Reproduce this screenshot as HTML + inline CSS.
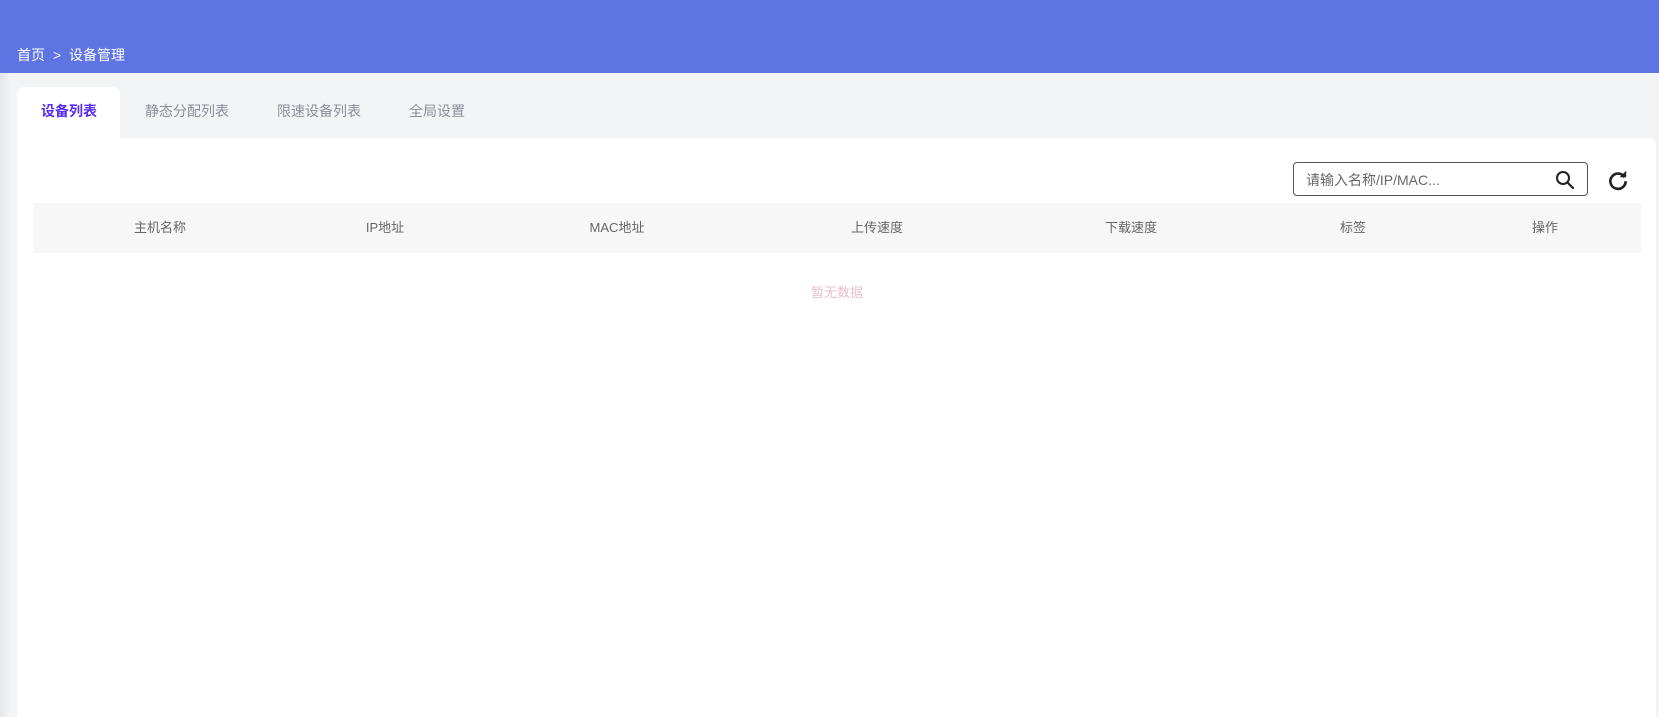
<!DOCTYPE html>
<html><head><meta charset="utf-8"><style>
*{margin:0;padding:0;box-sizing:border-box}
html,body{width:1659px;height:717px;overflow:hidden}
body{background:#f3f4f6;font-family:"Liberation Sans","Noto Sans CJK SC",sans-serif;position:relative}
.hdr{position:absolute;left:0;top:0;width:1659px;height:73px;background:#5e74e2}
.bc{position:absolute;left:17px;top:46px;color:#fff;font-size:14px;line-height:18px}
.shadow{position:absolute;left:0;top:73px;width:10px;height:644px;background:linear-gradient(to right,#e5e6ea,#f3f4f6)}
.tab{position:absolute;top:102px;font-size:14px;line-height:18px;color:#8a8f99}
.tabact{position:absolute;left:17px;top:87px;width:103px;height:60px;background:#fff;border-radius:8px 8px 0 0}
.card{position:absolute;left:17px;top:138px;width:1639px;height:579px;background:#fff;border-radius:0 8px 0 0}
.search{position:absolute;left:1293px;top:162px;width:295px;height:34px;border:1px solid #555;border-radius:4px;background:#fff}
.search span{position:absolute;left:12px;top:8px;font-size:14px;color:#666;line-height:18px}
.th{position:absolute;left:33px;top:203px;width:1608px;height:50px;background:#f7f7f7}
.col{position:absolute;top:220px;font-size:13px;line-height:16px;color:#666;transform:translateX(-50%);white-space:nowrap}
.empty{position:absolute;left:837px;top:282px;transform:translateX(-50%);font-size:13px;color:#e9bfc6}
</style></head><body>
<div class="hdr"></div>
<div class="bc">首页 <span style="margin:0 4px">&gt;</span> 设备管理</div>
<div class="shadow"></div>
<div class="tabact"></div>
<div class="tab" style="left:41px;color:#5a2bf0;font-weight:bold">设备列表</div>
<div class="tab" style="left:145px">静态分配列表</div>
<div class="tab" style="left:277px">限速设备列表</div>
<div class="tab" style="left:409px">全局设置</div>
<div class="card"></div>
<div class="search"><span>请输入名称/IP/MAC...</span>
<svg style="position:absolute;right:12px;top:7px" width="20" height="20" viewBox="0 0 20 20"><circle cx="8" cy="8" r="6" fill="none" stroke="#222" stroke-width="2"/><path d="M12.5 12.5L18 18" stroke="#222" stroke-width="2.2" stroke-linecap="round"/></svg></div>
<svg style="position:absolute;left:1606px;top:168px" width="24" height="24" viewBox="0 0 22 22"><path d="M17 8.5A7 7 0 1 0 18 12" fill="none" stroke="#222" stroke-width="2.4"/><path d="M12.5 8.5H18.5V2.5Z" fill="#222"/></svg>
<div class="th"></div>
<div class="col" style="left:160px">主机名称</div>
<div class="col" style="left:385px">IP地址</div>
<div class="col" style="left:617px">MAC地址</div>
<div class="col" style="left:877px">上传速度</div>
<div class="col" style="left:1131px">下载速度</div>
<div class="col" style="left:1353px">标签</div>
<div class="col" style="left:1545px">操作</div>
<div class="empty">暂无数据</div>
</body></html>
